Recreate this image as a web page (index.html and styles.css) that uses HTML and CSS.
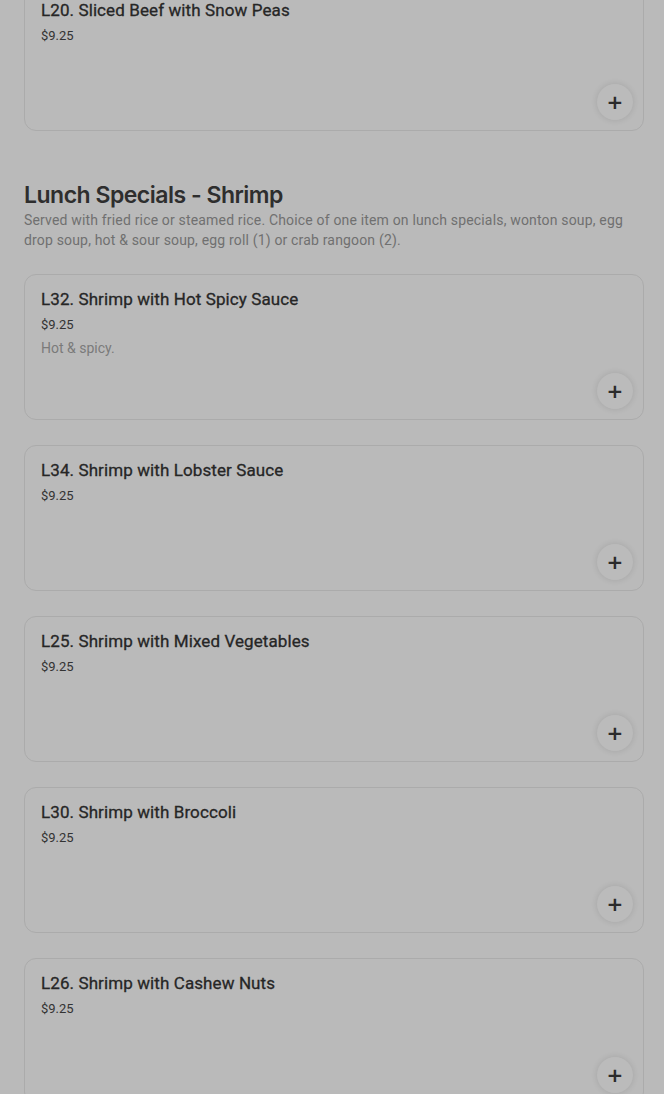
FILE: index.html
```html
<!DOCTYPE html>
<html lang="en">
<head>
    <meta charset="UTF-8">
    <meta name="viewport" content="width=device-width, initial-scale=1.0">
    <title>Lunch Specials</title>
    <link rel="stylesheet" href="styles.css">
</head>
<body>
    <div class="menu">
        <div class="item-card">
            <div class="item-name">L20. Sliced Beef with Snow Peas</div>
            <div class="item-price">$9.25</div>
            <button class="add-button" aria-label="Add">+</button>
        </div>

        <section class="menu-section">
            <h2>Lunch Specials - Shrimp</h2>
            <p class="section-desc">Served with fried rice or steamed rice. Choice of one item on lunch specials, wonton soup, egg drop soup, hot &amp; sour soup, egg roll (1) or crab rangoon (2).</p>

            <div class="item-card">
                <div class="item-name">L32. Shrimp with Hot Spicy Sauce</div>
                <div class="item-price">$9.25</div>
                <div class="item-desc">Hot &amp; spicy.</div>
                <button class="add-button" aria-label="Add">+</button>
            </div>
            <div class="item-card">
                <div class="item-name">L34. Shrimp with Lobster Sauce</div>
                <div class="item-price">$9.25</div>
                <button class="add-button" aria-label="Add">+</button>
            </div>
            <div class="item-card">
                <div class="item-name">L25. Shrimp with Mixed Vegetables</div>
                <div class="item-price">$9.25</div>
                <button class="add-button" aria-label="Add">+</button>
            </div>
            <div class="item-card">
                <div class="item-name">L30. Shrimp with Broccoli</div>
                <div class="item-price">$9.25</div>
                <button class="add-button" aria-label="Add">+</button>
            </div>
            <div class="item-card">
                <div class="item-name">L26. Shrimp with Cashew Nuts</div>
                <div class="item-price">$9.25</div>
                <button class="add-button" aria-label="Add">+</button>
            </div>
        </section>
    </div>
</body>
</html>
```

FILE: styles.css
```css
body {
    margin: 0;
    background-color: #bababa;
    font-family: Roboto, "Liberation Sans", sans-serif;
    color: #2b2b2b;
}
.menu {
    padding: 0 20px 0 24px;
    margin-top: -15px;
}
.menu-section {
    margin-top: 49px;
}
.menu-section h2 {
    font-family: Inter, "Liberation Sans", sans-serif;
    font-size: 23px;
    font-weight: 600;
    letter-spacing: -0.5px;
    color: #2e2e2e;
    margin: 0;
    line-height: 30px;
}
.section-desc {
    margin: 0 0 24px;
    font-size: 14px;
    line-height: 20px;
    letter-spacing: 0.17px;
    color: #707070;
}
.item-card {
    display: flex;
    flex-direction: column;
    height: 146px;
    box-sizing: border-box;
    padding: 12px 16px 10px;
    margin-bottom: 25px;
    border: 1px solid #ababab;
    border-radius: 12px;
}
.item-name {
    font-size: 17px;
    font-weight: 400;
    letter-spacing: 0.1px;
    line-height: 24px;
    color: #262626;
    -webkit-text-stroke: 0.3px #262626;
}
.item-price {
    padding-top: 2px;
    font-size: 13px;
    line-height: 23px;
    color: #333;
}
.item-desc {
    font-size: 14px;
    line-height: 24px;
    color: #7a7a7a;
}
.add-button {
    margin-top: auto;
    margin-right: -6px;
    align-self: flex-end;
    width: 36px;
    height: 36px;
    border: none;
    border-radius: 50%;
    background-color: #bbbbbb;
    box-shadow: 0 0 6px rgba(0,0,0,0.12);
    font-family: "DejaVu Sans", sans-serif;
    font-size: 20px;
    font-weight: 700;
    line-height: 36px;
    color: #2b2b2b;
    padding: 0;
}
```
